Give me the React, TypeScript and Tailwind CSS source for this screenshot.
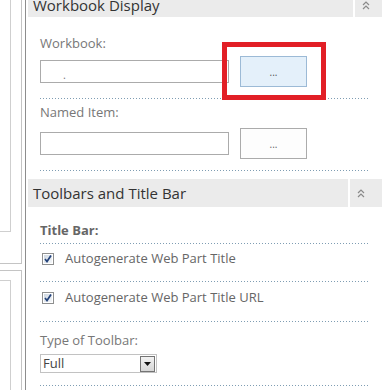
import React from 'react'

const font = { fontFamily: '"Open Sans", "Liberation Sans", sans-serif' }

const Chevrons = () => (
  <svg width="8" height="9" viewBox="0 0 8 9" fill="none">
    <path d="M1 4 L4 1 L7 4" stroke="#8a8a8a" strokeWidth="1.2" />
    <path d="M1 8 L4 5 L7 8" stroke="#8a8a8a" strokeWidth="1.2" />
  </svg>
)

const Dotted = ({ className = '' }: { className?: string }) => (
  <div
    className={`ml-[12px] mr-[12px] h-px bg-[linear-gradient(to_right,#7f9db3_1px,transparent_1px)] bg-[length:3px_1px] ${className}`}
  />
)

const Checkbox = () => (
  <svg width="12" height="12" viewBox="0 0 12 12" className="shrink-0">
    <defs>
      <linearGradient id="cbg" x1="0" y1="0" x2="1" y2="1">
        <stop offset="0" stopColor="#cfd8e2" />
        <stop offset="1" stopColor="#f4f6f8" />
      </linearGradient>
    </defs>
    <rect x="0.5" y="0.5" width="11" height="11" fill="#fff" stroke="#8e8f8f" />
    <rect x="2" y="2" width="8" height="8" fill="url(#cbg)" />
    <path d="M3 6 L5 8.5 L9 2.5" stroke="#23427a" strokeWidth="1.7" fill="none" />
  </svg>
)

const InputRow = ({ active }: { active?: boolean }) => (
  <div className="relative ml-[12px] flex h-[31px] items-center">
    <div className="h-[23px] w-[189px] border border-[#ababab] bg-white">
      {active && <span className="ml-[22px] text-[11px] leading-[18px] text-[#777]">.</span>}
    </div>
    <div
      className={`ml-[11px] flex h-[31px] w-[67px] items-center justify-center border text-[10px] leading-none ${
        active ? 'border-[#9cbad6] bg-[#e4f0fa] text-[#555]' : 'border-[#ababab] bg-[#fdfdfd] text-[#666]'
      }`}
    >
      ...
    </div>
    {active && (
      <div className="absolute left-[182px] top-[-14px] h-[58px] w-[104px] border-[5px] border-[#e21f26]" />
    )}
  </div>
)

const Header = ({ title, h, leftW }: { title: string; h: string; leftW: string }) => (
  <div className={`flex ${h}`}>
    <div className={`${leftW} flex items-center bg-[#ebebeb] pl-[5px] text-[15px] text-[#333]`}>{title}</div>
    <div className="ml-[2px] flex flex-1 items-center justify-start bg-[#ebebeb] pl-[7px]">
      <Chevrons />
    </div>
  </div>
)

export default function App() {
  return (
    <div className="flex h-[390px] w-[382px] overflow-hidden bg-white" style={font}>
      {/* left panes */}
      <div className="flex w-[26px] shrink-0 flex-col border-r border-[#8d8d8d]">
        <div className="h-[264px] w-[22px] border-b border-r border-[#c4c4c4]">
          <div className="h-[232px] w-[11px] border-b border-r border-[#cfcfcf]" />
        </div>
        <div className="mt-[6px] w-[22px] flex-1 border-r border-t border-[#c4c4c4]">
          <div className="mt-[9px] h-full w-[11px] border-r border-t border-[#cfcfcf]" />
        </div>
      </div>

      {/* main panel */}
      <div className="flex-1 pl-[2px]">
        <div className="-mt-[7px]">
          <Header title="Workbook Display" h="h-[24px]" leftW="w-[325px]" />
        </div>

        <div className="ml-[12px] mt-[17px] text-[13px] leading-[18px] text-[#777]">Workbook:</div>
        <div className="mt-[4px]">
          <InputRow active />
        </div>
        <Dotted className="mt-[11px]" />

        <div className="ml-[12px] mt-[4px] text-[13px] leading-[18px] text-[#777]">Named Item:</div>
        <div className="mt-[7px]">
          <InputRow />
        </div>
        <Dotted className="mt-[11px]" />

        <div className="mt-[8px]">
          <Header title="Toolbars and Title Bar" h="h-[28px]" leftW="w-[320px]" />
        </div>

        <div className="ml-[12px] mt-[14px] text-[13px] font-bold leading-[18px] text-[#666]">Title Bar:</div>
        <Dotted className="mt-[4px]" />

        <div className="ml-[14px] mt-[6px] flex h-[18px] items-center gap-[11px] text-[13px] text-[#666]">
          <Checkbox />
          <span>Autogenerate Web Part Title</span>
        </div>
        <Dotted className="mt-[13px]" />

        <div className="ml-[14px] mt-[7px] flex h-[18px] items-center gap-[11px] text-[13px] text-[#666]">
          <Checkbox />
          <span>Autogenerate Web Part Title URL</span>
        </div>
        <Dotted className="mt-[14px]" />

        <div className="ml-[12px] mt-[9px] text-[13px] leading-[18px] text-[#777]">Type of Toolbar:</div>
        <div className="ml-[12px] mt-[5px] flex h-[19px] w-[117px] items-center border border-[#c2c2c2] bg-white">
          <span className="flex-1 pl-[2px] text-[13px] leading-none text-[#444]">Full</span>
          <div className="mr-px flex h-[16px] w-[15px] items-center justify-center border border-[#747474] bg-[linear-gradient(#f2f2f2,#d6d6d6)]">
            <svg width="7" height="4" viewBox="0 0 7 4">
              <path d="M0 0 H7 L3.5 4 Z" fill="#111" />
            </svg>
          </div>
        </div>
        <Dotted className="mt-[12px]" />
      </div>
    </div>
  )
}
